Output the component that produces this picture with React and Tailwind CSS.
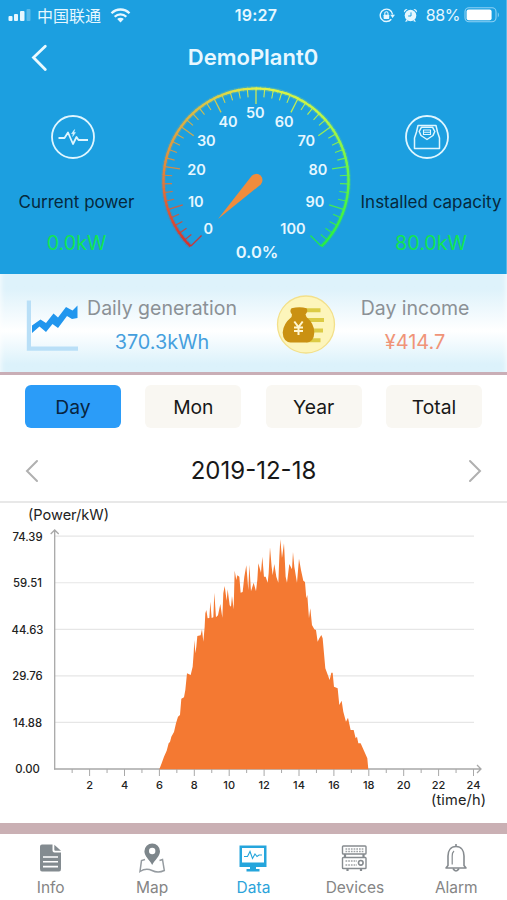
import { useState } from 'react';

const GAUGE_STOPS = [
  [0, [214, 48, 44]],
  [10, [224, 90, 52]],
  [20, [226, 140, 60]],
  [35, [218, 190, 70]],
  [50, [226, 242, 72]],
  [65, [196, 246, 70]],
  [80, [110, 246, 70]],
  [100, [34, 240, 66]],
];

const gaugeColor = (value) => {
  const i = Math.max(1, GAUGE_STOPS.findIndex(([v]) => v >= value));
  const [v0, a] = GAUGE_STOPS[i - 1];
  const [v1, b] = GAUGE_STOPS[i];
  const t = (value - v0) / (v1 - v0);
  return `rgb(${a.map((c, k) => Math.round(c + (b[k] - c) * t)).join(',')})`;
};

// value 0..100 runs clockwise from 225deg to -45deg
const polar = (value, r) => {
  const a = ((135 + value * 2.7) * Math.PI) / 180;
  return [100 + r * Math.cos(a), 100 + r * Math.sin(a)];
};

const GAUGE_LABELS = [
  [0, 52.2, 148.2], [10, 39.8, 121.2], [20, 40.5, 89], [30, 50.3, 60],
  [40, 72, 41], [50, 99.3, 31.5], [60, 128.2, 41], [70, 150.3, 60],
  [80, 162, 89], [90, 159, 121.2], [100, 137, 148.2],
];

const Gauge = () => (
  <svg width="200" height="190" viewBox="0 0 200 190">
    {Array.from({ length: 100 }, (_, v) => {
      const [x1, y1] = polar(v, 92.5);
      const [x2, y2] = polar(Math.min(100, v + 1.15), 92.5);
      return (
        <g key={v} stroke={gaugeColor(v)}>
          <path d={`M${x1} ${y1}A92.5 92.5 0 0 1 ${x2} ${y2}`} fill="none" strokeWidth="5" opacity="0.18" />
          <path d={`M${x1} ${y1}A92.5 92.5 0 0 1 ${x2} ${y2}`} fill="none" strokeWidth="2.4" />
        </g>
      );
    })}
    {Array.from({ length: 51 }, (_, i) => {
      const v = i * 2;
      const major = v % 10 === 0;
      const [x1, y1] = polar(v, 92);
      const [x2, y2] = polar(v, major ? 77 : 84);
      return <line key={v} x1={x1} y1={y1} x2={x2} y2={y2} stroke={gaugeColor(v)} strokeWidth={major ? 1.3 : 1.1} opacity="0.9" />;
    })}
    <g fill="#e6f7ff" fontFamily="Inter, sans-serif" fontSize="14.5" fontWeight="600" textAnchor="middle">
      {GAUGE_LABELS.map(([v, x, y]) => (
        <text key={v} x={x} y={y + 5}>{v}</text>
      ))}
      <text x="101" y="177" fontSize="16.5" fontWeight="600">0.0%</text>
    </g>
    <path d="M62 138L95.8 94.8A6.2 6.2 0 1 1 104.8 103.4Z" fill="#f08c3c" />
  </svg>
);

const POWER_CURVE =
  '28,718 35,700 42,680 50,662 56,640 60,636 64,620 72,606 78,580 84,560 90,555 94,506 102,502 106,480 111,430 122,435 128,410 131,370 133,330 136,370 139,350 142,318 152,316 156,298 160,335 164,290 166,250 169,240 173,265 178,264 181,215 185,264 190,262 193,188 198,262 204,256 211,222 217,263 220,190 224,168 230,212 233,178 239,226 243,230 246,198 251,238 254,122 259,150 262,136 268,140 272,188 278,186 283,140 289,106 295,180 298,104 303,184 311,158 318,184 322,150 325,100 333,128 337,80 342,140 347,140 353,158 356,130 360,52 365,110 368,136 373,102 379,140 385,158 388,80 391,28 396,84 402,40 407,140 411,158 418,102 426,118 429,66 433,110 441,158 447,86 453,120 460,152 465,156 469,205 472,195 477,265 481,235 486,285 493,298 498,300 503,335 508,325 514,315 518,325 526,415 539,450 544,428 548,428 552,470 563,475 568,525 575,512 580,545 588,575 594,563 602,600 611,600 617,625 621,620 625,640 632,640 642,662 652,685 655,718';

const Y_LABELS = ['74.39', '59.51', '44.63', '29.76', '14.88', '0.00'];

const PowerChart = () => (
  <svg width="507" height="320" viewBox="0 0 507 320" fontFamily="Inter, sans-serif" fill="#222">
    <text x="28" y="17" fontSize="14.6" textLength="81">(Power/kW)</text>
    {Y_LABELS.map((label, i) => (
      <g key={label}>
        {i < 5 && <line x1="55" x2="474" y1={33.2 + i * 46.55} y2={33.2 + i * 46.55} stroke="#e6e6e6" strokeWidth="1.2" />}
        <text x="27.5" y={37.6 + i * 46.55} fontSize="11.3" fontWeight="500" textAnchor="middle">{label}</text>
      </g>
    ))}
    <g fill="none" stroke="#a8a8a8" strokeWidth="1.3">
      <path d="M54.7 266.5V27M50.7 31L54.7 27L58.7 31" />
      <path d="M54 266H481M477 262L481 266L477 270" />
      {Array.from({ length: 24 }, (_, i) => (
        <path key={i} d={`M${54.7 + (i + 1) * 17.45} 266v${i % 2 ? 7 : 4}`} strokeWidth="1" />
      ))}
    </g>
    <polygon points={POWER_CURVE} transform="translate(150 27) scale(0.3333)" fill="#f47932" />
    {Array.from({ length: 12 }, (_, i) => (
      <text key={i} x={54.7 + (i + 1) * 34.9} y="286" fontSize="11" fontWeight="500" textAnchor="middle">{(i + 1) * 2}</text>
    ))}
    <text x="431" y="302" fontSize="14.6" textLength="55">(time/h)</text>
  </svg>
);

const StatusBar = () => (
  <div className="flex h-[30px] items-center justify-between pl-2 pr-[5px] text-[#e6f7ff]">
    <div className="flex w-[170px] items-center">
      <svg width="24" height="14" viewBox="0 0 24 14" fill="currentColor">
        <rect x="0.5" y="8" width="4" height="5" rx="1" />
        <rect x="6" y="6" width="4" height="7" rx="1" />
        <rect x="12" y="3" width="4.5" height="10" rx="1" />
        <rect x="18.5" y="1" width="4" height="12" rx="1" opacity="0.3" />
      </svg>
      <span className="ml-[5px] text-[16px] leading-none font-['Noto_Sans_CJK_SC',sans-serif]">中国联通</span>
      <svg className="ml-[9px]" width="21" height="15" viewBox="0 0 21 15" fill="none" stroke="currentColor" strokeWidth="2.3">
        <path d="M1.5 5.2A12.8 12.8 0 0 1 19.5 5.2M4.7 8.7A8.2 8.2 0 0 1 16.3 8.7" />
        <path d="M10.5 14.4L7.2 11.1A4.7 4.7 0 0 1 13.8 11.1Z" fill="currentColor" stroke="none" />
      </svg>
    </div>
    <span className="pl-[3px] text-[16px] font-semibold tracking-[0.2px]">19:27</span>
    <div className="flex w-[170px] items-center justify-end">
      <svg width="16" height="15" viewBox="0 0 16 15" fill="none" stroke="currentColor" strokeWidth="1.4">
        <path d="M12.3 11.2A6.2 6.2 0 1 1 13.6 6.5" />
        <path d="M11.2 6.8H16L13.6 10Z" fill="currentColor" stroke="none" />
        <rect x="4.6" y="6.7" width="5.6" height="4.2" rx="0.6" fill="currentColor" stroke="none" />
        <path d="M5.8 7V5.3a1.6 1.6 0 0 1 3.2 0V7" strokeWidth="1.1" />
      </svg>
      <svg className="ml-[8px]" width="15" height="15" viewBox="0 0 15 15">
        <g fill="currentColor">
          <circle cx="7.5" cy="7.5" r="5.8" />
          <path d="M1 4.6A3 3 0 0 1 4.6 1Z M14 4.6A3 3 0 0 0 10.4 1Z" />
          <path d="M3.2 11.5L2.2 14L5 13ZM11.8 11.5L12.8 14L10 13Z" />
        </g>
        <path d="M8 4.4V8H5.2" fill="none" stroke="#1c9fe0" strokeWidth="1" />
      </svg>
      <span className="ml-[8px] text-[16px] tracking-[-0.4px]">88%</span>
      <svg className="ml-[4px]" width="37" height="16" viewBox="0 0 37 16">
        <rect x="1" y="0.8" width="31" height="14" rx="4" fill="none" stroke="#8ed1f3" strokeWidth="1.1" />
        <rect x="2.6" y="2.5" width="25" height="10.8" rx="2" fill="#fff" />
        <path d="M33.8 5.2q2.2 2.7 0 5.2z" fill="#8ed1f3" />
      </svg>
    </div>
  </div>
);

const PulseIcon = () => (
  <svg className="mr-[8px]" width="46" height="46" viewBox="0 0 46 46" fill="none" stroke="#dff6ff" strokeWidth="1.8">
    <circle cx="23" cy="23" r="21" />
    <path d="M8.5 24H14.5L18 18.5L23 30L26.5 23L28.5 26H38" strokeLinejoin="round" />
    <path d="M24.6 15.5L21.5 19.8H23.3L22.6 22.5L25.5 18.6H23.8Z" fill="#dff6ff" strokeWidth="0.5" />
  </svg>
);

const CapacityIcon = () => (
  <svg className="mr-[8px]" width="46" height="46" viewBox="0 0 46 46" fill="none" stroke="#dff6ff" strokeWidth="1.8" strokeLinejoin="round">
    <circle cx="23" cy="23" r="21" />
    <path d="M14 11.5H32L33.5 18L35.5 24V34.5H10.5V24L12.5 18Z" strokeWidth="1.5" />
    <path d="M17.5 13.2L15.2 17.5L17 21.5L23 25.5L29 21.5L30.8 17.5L28.5 13.2Z" strokeWidth="1.5" />
    <path d="M19.5 16H26.5V20.5H19.5ZM19.5 18.2H26.5" strokeWidth="1.1" />
  </svg>
);

const HeaderStat = ({ icon, label, value, className }) => (
  <div className={`flex flex-col items-center whitespace-nowrap ${className}`}>
    {icon}
    <span className="mt-[30px] text-[17px] leading-[24px] text-[#06283c]">{label}</span>
    <span className="mt-[17px] text-[19.7px] leading-[24px] text-[#12e552]">{value}</span>
  </div>
);

const TrendIcon = () => (
  <svg className="ml-[26px] mt-[25px] shrink-0" width="54" height="52" viewBox="0 0 54 52">
    <path d="M0.8 1.5H5V47.5H52V51.8H0.8Z" fill="#b9dff7" />
    <path d="M6 26.5L14.5 20.5L20 24L27.5 14.5L32 18.5L40 8L46.5 11.5L51.5 6.5V19L46 20L41 17L32 29L26.5 25L20 33L13.5 27.5L6 34Z" fill="#2196ee" />
  </svg>
);

const MoneyIcon = () => (
  <svg className="ml-[32px] mt-[21px] shrink-0" width="60" height="60" viewBox="0 0 60 60">
    <circle cx="30" cy="29.5" r="28.5" fill="#fdf5bb" stroke="#f3e08a" strokeWidth="1.3" />
    <path d="M26 15.3H44.5M28 25H48M30 35.5H47M30 45.3H44.5" stroke="#dccb45" strokeWidth="4" />
    <path d="M15.5 13.2Q24 11.5 30.5 13.2Q32.5 16 29.5 19.5L30.5 22Q38.5 29 38.3 37.5Q38 46.5 31 47.5H14.5Q7 46.5 6.7 37.5Q7 29 15.5 22L16 19.5Q13 16 15.5 13.2Z" fill="#ca9112" />
    <path d="M18.3 26.5L22.5 32L26.7 26.5M22.5 32V40M18 32.4H27M18 36H27" fill="none" stroke="#fff6d0" strokeWidth="2" />
  </svg>
);

const Chevron = ({ d }) => (
  <svg width="14" height="24" viewBox="0 0 14 24" fill="none" stroke="#b0b0b0" strokeWidth="2" strokeLinecap="round">
    <path d={d} />
  </svg>
);

const InfoIcon = () => (
  <svg width="30" height="30" viewBox="0 0 30 30">
    <path d="M6 1.5H16.5V7.5Q16.5 9.5 18.5 9.5H25V26Q25 28.5 23 28.5H6Q4 28.5 4 26V3.5Q4 1.5 6 1.5Z" fill="#838b90" />
    <path d="M18.3 1.8L25 7.8H19.3Q18.3 7.8 18.3 6.8Z" fill="#838b90" />
    <path d="M7 14H22M7 18.8H22M7 23.6H22" stroke="#fff" strokeWidth="1.6" />
  </svg>
);

const MapIcon = () => (
  <svg width="30" height="30" viewBox="0 0 30 30">
    <path d="M8 16.5L4.5 17.5L3 28.5Q9 24.5 15 27.5Q21 30.5 27.3 27.5L25.5 16.5L22.5 17.5" fill="none" stroke="#959ba0" strokeWidth="1.5" />
    <path d="M15.2 0.5A7.8 7.8 0 0 0 7.4 8.3C7.4 13.5 12.5 16.8 15.2 22C17.9 16.8 23 13.5 23 8.3A7.8 7.8 0 0 0 15.2 0.5Z" fill="#7d868b" />
    <circle cx="15.2" cy="8" r="3.2" fill="#fff" />
  </svg>
);

const DataIcon = () => (
  <svg width="30" height="30" viewBox="0 0 30 30">
    <path d="M1.5 2.5H28.5V24H1.5Z" fill="#25a5dc" />
    <path d="M4 5H26V19.5H4Z" fill="#fff" />
    <path d="M6 13.5H9.5L12 8.5L14.5 15.5L17 11L19 13.5L21 12H24" fill="none" stroke="#25a5dc" strokeWidth="1.1" />
    <path d="M12 24H18V26H21.5V28.5H8.5V26H12Z" fill="#25a5dc" />
  </svg>
);

const DevicesIcon = () => (
  <svg className="mr-[2px]" width="30" height="30" viewBox="0 0 30 30" fill="none" stroke="#868b8f" strokeWidth="1.4">
    <rect x="3.5" y="3" width="23.5" height="8" rx="0.8" />
    <rect x="3.5" y="14.5" width="23.5" height="11" rx="0.8" />
    <path d="M6 11V14M24.5 11V14M8.5 25.5V28M22 25.5V28" strokeWidth="2.2" />
    <path d="M6.5 6H24.5M6.5 8.5H24.5M6.5 18H18M6.5 22H18" strokeDasharray="1.7 1" strokeWidth="1.3" opacity="0.8" />
    <circle cx="21.8" cy="19.8" r="2.3" strokeWidth="1.6" />
  </svg>
);

const AlarmIcon = () => (
  <svg width="30" height="30" viewBox="0 0 30 30" fill="none" stroke="#868b8f" strokeWidth="1.6" strokeLinejoin="round">
    <path d="M15 3.5C9.5 3.5 7 8 7 13V22.5L5 25H25L23 22.5V13C23 8 20.5 3.5 15 3.5Z" />
    <path d="M15 1V3.5M12 25.5Q15 30.5 18 25.5" />
    <path d="M11.2 21.5V13Q11.2 9.5 13 8" strokeWidth="1.2" />
  </svg>
);

const NAV_ITEMS = [
  { name: 'Info', Icon: InfoIcon },
  { name: 'Map', Icon: MapIcon },
  { name: 'Data', Icon: DataIcon },
  { name: 'Devices', Icon: DevicesIcon },
  { name: 'Alarm', Icon: AlarmIcon },
];

const App = () => {
  const [range, setRange] = useState('Day');

  return (
    <div className="flex h-[900px] w-[507px] flex-col overflow-hidden bg-white font-['Inter',sans-serif]">
      <header className="flex h-[274px] flex-col border-r border-[#58b8e8] bg-[#1c9fe0]">
        <StatusBar />
        <div className="grid h-[51px] grid-cols-[80px_1fr_80px] items-center">
          <button className="pl-[30px] pt-[2px]">
            <svg width="20" height="30" viewBox="0 0 20 30" fill="none" stroke="#eafaff" strokeWidth="2.8" strokeLinecap="round">
              <path d="M15.3 4.3L3.5 15.5L15.3 27.5" />
            </svg>
          </button>
          <h1 className="pt-[4px] text-center text-[22px] font-semibold text-[#e8f8ff]">DemoPlant0</h1>
        </div>
        <div className="flex">
          <HeaderStat icon={<PulseIcon />} label="Current power" value="0.0kW" className="w-[156px] pt-[33px] pr-[3px]" />
          <Gauge />
          <HeaderStat icon={<CapacityIcon />} label="Installed capacity" value="80.0kW" className="w-[150px] pt-[33px]" />
        </div>
      </header>

      <section className="flex h-[101px] border-b-[3px] border-[#c9aeb6] bg-linear-to-b from-[#def2fb] from-15% via-white via-58% to-[#dcf2fb] to-92% shadow-[inset_6px_0_6px_-6px_#fff,inset_-6px_0_6px_-6px_#fff]">
        <TrendIcon />
        <div className="flex w-[164px] flex-col items-center pt-[21px]">
          <span className="text-[19.5px] leading-[26px] text-[#8b9196]">Daily generation</span>
          <span className="mt-[8px] text-[19.8px] leading-[26px] text-[#459fdd]">370.3kWh</span>
        </div>
        <MoneyIcon />
        <div className="flex flex-1 flex-col items-center pr-[13px] pt-[21px]">
          <span className="text-[19.5px] leading-[26px] text-[#8b9196]">Day income</span>
          <span className="mt-[8px] text-[20px] leading-[26px] text-[#f09478]">¥414.7</span>
        </div>
      </section>

      <div className="flex justify-between pl-[25px] pr-[25px] pt-[10px]">
        {['Day', 'Mon', 'Year', 'Total'].map((name) => (
          <button
            key={name}
            onClick={() => setRange(name)}
            className={`h-[43px] w-[96px] rounded-md pt-[2px] text-[19.3px] ${range === name ? 'bg-[#2b9cf8] text-[#082440]' : 'bg-[#f9f7f2] text-[#181818]'}`}
          >
            {name}
          </button>
        ))}
      </div>

      <div className="flex h-[75px] items-center justify-between border-b-2 border-[#e8e8e8] px-[25px] pt-[12px]">
        <Chevron d="M12 2L2 12L12 22" />
        <span className="pt-[1px] text-[24px] text-[#181818]">2019-12-18</span>
        <Chevron d="M2 2L12 12L2 22" />
      </div>

      <PowerChart />

      <div className="h-[11px] bg-[#cab0b4]" />
      <nav className="grid h-[66px] grid-cols-5">
        {NAV_ITEMS.map(({ name, Icon }) => (
          <a key={name} className={`flex flex-col items-center pt-[9px] text-[15.5px] ${name === 'Data' ? 'text-[#2ba3da]' : 'text-[#858585]'}`}>
            <Icon />
            <span className="mt-[5px] leading-[20px]">{name}</span>
          </a>
        ))}
      </nav>
    </div>
  );
};

export default App;
